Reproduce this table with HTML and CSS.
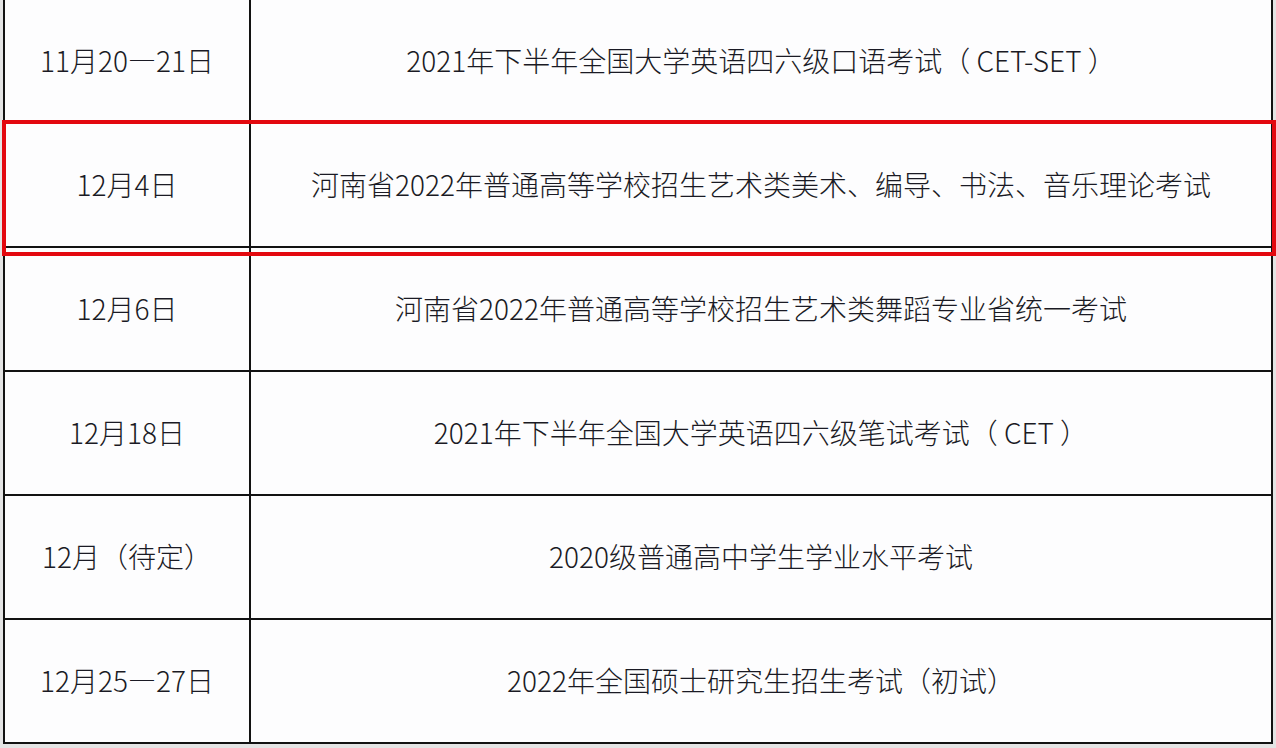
FILE: index.html
```html
<!DOCTYPE html>
<html lang="zh-CN">
<head>
<meta charset="utf-8">
<link rel="stylesheet" href="styles.css">
</head>
<body>
<div class="page">
  <div class="grid">
    <div class="cell date">11月20—21日</div>
    <div class="cell">2021年下半年全国大学英语四六级口语考试（ CET-SET ）</div>
    <div class="cell date">12月4日</div>
    <div class="cell">河南省2022年普通高等学校招生艺术类美术、编导、书法、音乐理论考试</div>
    <div class="cell date">12月6日</div>
    <div class="cell">河南省2022年普通高等学校招生艺术类舞蹈专业省统一考试</div>
    <div class="cell date">12月18日</div>
    <div class="cell">2021年下半年全国大学英语四六级笔试考试（ CET ）</div>
    <div class="cell date">12月（待定）</div>
    <div class="cell">2020级普通高中学生学业水平考试</div>
    <div class="cell date">12月25—27日</div>
    <div class="cell">2022年全国硕士研究生招生考试（初试）</div>
  </div>
  <div class="highlight"></div>
</div>
</body>
</html>
```

FILE: styles.css
```css
html, body {
  margin: 0;
  padding: 0;
}
body {
  background: #e4e4e4;
  width: 1276px;
  height: 748px;
  overflow: hidden;
}
.page {
  position: relative;
  padding-left: 3px;
}
.grid {
  margin-top: -2px;
  width: 1270px;
  box-sizing: border-box;
  display: grid;
  grid-template-columns: 244px 1020px;
  grid-auto-rows: 122px;
  gap: 2px;
  padding: 2px;
  background: #121212;
}
.cell {
  background: #fdfdfe;
  display: flex;
  align-items: center;
  justify-content: center;
  font-family: "Noto Sans CJK SC", "Noto Sans", sans-serif;
  font-size: 28px;
  font-weight: 300;
  color: #1a1a24;
  white-space: nowrap;
  padding-bottom: 2px;
}
.highlight {
  position: absolute;
  left: 2px;
  top: 122px;
  width: 1274px;
  height: 136px;
  box-sizing: border-box;
  border: 4px solid #e3080f;
}
```
